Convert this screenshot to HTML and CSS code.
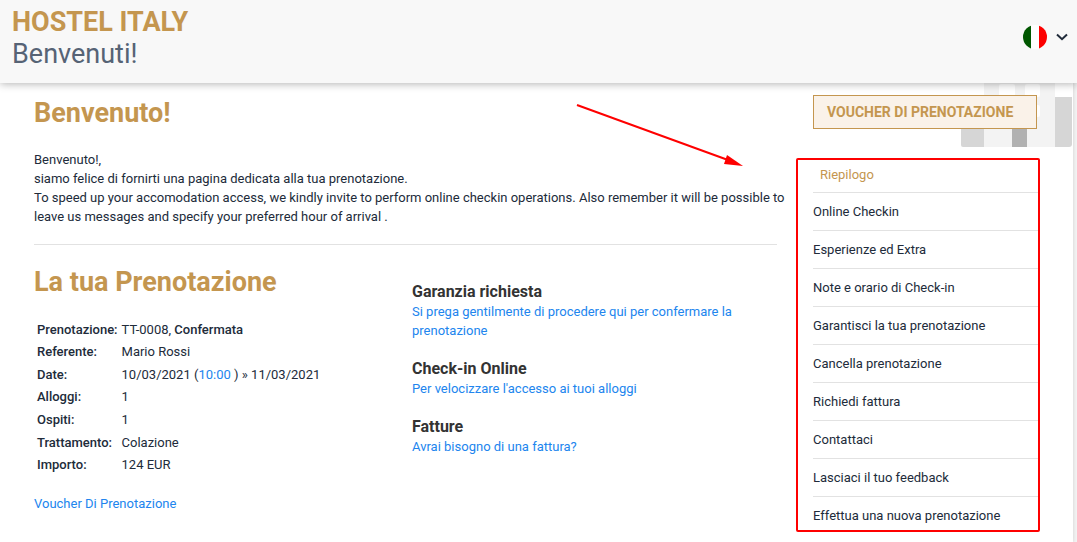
FILE: index.html
```html
<!DOCTYPE html>
<html lang="it">
  <head>
    <meta charset="UTF-8" />
    <meta name="viewport" content="width=device-width, initial-scale=1.0" />
    <title>Hostel Italy - Benvenuti!</title>
    <link rel="stylesheet" href="styles.css">
  </head>
  <body>
    <header class="header">
      <div class="brand">
        <h1 class="brand-name">HOSTEL ITALY</h1>
        <p class="brand-sub">Benvenuti!</p>
      </div>
      <button class="lang" type="button" aria-label="Lingua: italiano">
        <svg class="flag" viewBox="0 0 24 24" width="24" height="24">
          <clipPath id="round"><circle cx="12" cy="12" r="12" /></clipPath>
          <g clip-path="url(#round)">
            <rect width="8" height="24" fill="#005700" />
            <rect x="8" width="8" height="24" fill="#fff" />
            <rect x="16" width="8" height="24" fill="#fc0000" />
          </g>
        </svg>
        <svg viewBox="0 0 12 8" width="12" height="8">
          <path d="M1 1.5 L6 6.2 L11 1.5" fill="none" stroke="#212b3a" stroke-width="2" />
        </svg>
      </button>
    </header>

    <div class="page">
      <main class="content">
        <section class="intro">
          <h2 class="title">Benvenuto!</h2>
          <p>
            Benvenuto!,<br />
            siamo felice di fornirti una pagina dedicata alla tua prenotazione.<br />
            To speed up your accomodation access, we kindly invite to perform online checkin operations. Also remember it will be possible to leave us messages and specify your preferred hour of arrival .
          </p>
          <svg class="arrow" viewBox="0 0 168 64" width="168" height="64">
            <path d="M1 2 L152 57" stroke="#fe0000" stroke-width="2" />
            <path d="M151 52 L167 63 L148 61 Z" fill="#fe0000" />
          </svg>
        </section>

        <div class="details">
          <section class="booking">
            <h2 class="title">La tua Prenotazione</h2>
            <table class="booking-table">
              <tr><th scope="row">Prenotazione:</th><td>TT-0008, <b>Confermata</b></td></tr>
              <tr><th scope="row">Referente:</th><td>Mario Rossi</td></tr>
              <tr><th scope="row">Date:</th><td>10/03/2021 (<a href="#">10:00</a> ) » 11/03/2021</td></tr>
              <tr><th scope="row">Alloggi:</th><td>1</td></tr>
              <tr><th scope="row">Ospiti:</th><td>1</td></tr>
              <tr><th scope="row">Trattamento:</th><td>Colazione</td></tr>
              <tr><th scope="row">Importo:</th><td>124 EUR</td></tr>
            </table>
            <a href="#">Voucher Di Prenotazione</a>
          </section>

          <section class="todo">
            <div>
              <h3>Garanzia richiesta</h3>
              <a href="#">Si prega gentilmente di procedere qui per confermare la prenotazione</a>
            </div>
            <div>
              <h3>Check-in Online</h3>
              <a href="#">Per velocizzare l'accesso ai tuoi alloggi</a>
            </div>
            <div>
              <h3>Fatture</h3>
              <a href="#">Avrai bisogno di una fattura?</a>
            </div>
          </section>
        </div>
      </main>

      <aside class="sidebar">
        <svg class="building" viewBox="0 0 112 64" width="112" height="64">
          <path d="M0 0 H23 V64 H2 Q0 64 0 62 Z" fill="#d6d6d6" />
          <rect x="23" width="71" height="64" fill="#f3f3f3" />
          <rect x="0" width="23" height="14" fill="#fff" />
          <rect x="38" y="1" width="16" height="13" rx="2" fill="#fff" />
          <rect x="64" y="1" width="15" height="13" rx="2" fill="#fff" />
          <rect x="64" y="22" width="15" height="12" rx="2" fill="#fff" />
          <rect x="51" y="40" width="15" height="24" fill="#b1b1b1" />
          <path d="M94 14 H111 V61 Q111 64 108 64 H94 Z" fill="#d6d6d6" />
        </svg>
        <a class="voucher" href="#">VOUCHER DI PRENOTAZIONE</a>
        <nav class="menu">
          <a class="active" href="#">Riepilogo</a>
          <a href="#">Online Checkin</a>
          <a href="#">Esperienze ed Extra</a>
          <a href="#">Note e orario di Check-in</a>
          <a href="#">Garantisci la tua prenotazione</a>
          <a href="#">Cancella prenotazione</a>
          <a href="#">Richiedi fattura</a>
          <a href="#">Contattaci</a>
          <a href="#">Lasciaci il tuo feedback</a>
          <a href="#">Effettua una nuova prenotazione</a>
        </nav>
      </aside>
    </div>
  </body>
</html>
```
FILE: styles.css
```css
* {
  box-sizing: border-box;
}

body {
  margin: 0;
  font-family: Roboto, "Liberation Sans", sans-serif;
  font-size: 13px;
  line-height: 19px;
  color: #212b3a;
  background: #f3f3f3;
  display: flex;
  flex-direction: column;
  min-height: 100vh;
}

h1,
h2,
h3,
p {
  margin: 0;
}

a {
  color: #2185ee;
  text-decoration: none;
}

b,
th {
  font-weight: 500;
}

.header {
  display: flex;
  justify-content: space-between;
  align-items: flex-start;
  padding: 6px 9px 13px 12px;
  background: #f8f8f8;
  box-shadow: 0 1px 8px rgba(0, 0, 0, 0.3);
  position: relative;
  z-index: 2;
}

.brand-name,
.brand-sub {
  font-size: 27px;
  line-height: 32px;
}

.brand-name {
  font-weight: 700;
  color: #c4964f;
}

.brand-sub {
  font-weight: 400;
  color: #566375;
}

.lang {
  display: flex;
  align-items: center;
  gap: 9px;
  padding: 0;
  margin-top: 19px;
  border: 0;
  background: none;
  cursor: pointer;
}

.page {
  flex: 1;
  display: flex;
  gap: 19px;
  margin-right: 4px;
  padding: 12px 33px 10px 34px;
  background: #fff;
  box-shadow: 0 0 4px rgba(0, 0, 0, 0.15);
  position: relative;
}

.content {
  flex: 1;
}

.title {
  font-size: 27px;
  line-height: 36px;
  font-weight: 700;
  color: #c4964f;
}

.intro {
  padding-bottom: 18px;
  border-bottom: 1px solid #e2e2e2;
  position: relative;
}

.intro p {
  margin: 19px -14px 0 0;
}

/* pointer from the intro to the menu */
.arrow {
  position: absolute;
  top: 8px;
  right: 33px;
}

.details {
  display: grid;
  grid-template-columns: 378px 1fr;
  padding-top: 19px;
}

.booking-table {
  height: 160px;
  margin: 17px 0;
  border-spacing: 2px;
}

.booking-table th,
.booking-table td {
  padding: 0 1px;
  text-align: left;
}

.todo {
  display: flex;
  flex-direction: column;
  gap: 19px;
  padding: 18px 24px 0 0;
}

.todo h3 {
  font-size: 16px;
  line-height: 20px;
  font-weight: 700;
  color: #333;
}

.sidebar {
  width: 244px;
}

.building {
  position: absolute;
  top: 0;
  right: 0;
}

.voucher {
  display: block;
  position: relative;
  margin: 0 3px 29px 17px;
  padding: 6px 13px;
  border: 1px solid #c4964f;
  background: #faf2e9;
  color: #c4964f;
  font-size: 14px;
  line-height: 20px;
  font-weight: 700;
  white-space: nowrap;
}

.menu {
  border: 2px solid #fe0000;
  border-radius: 2px;
  padding-left: 15px;
}

.menu a {
  display: block;
  padding: 9px 0;
  color: #212b3a;
  border-bottom: 1px solid #e2e2e2;
}

.menu a:last-child {
  padding-bottom: 5px;
  border-bottom: 0;
}

.menu .active {
  padding: 5px 7px 8px;
  color: #c4964f;
}
```
